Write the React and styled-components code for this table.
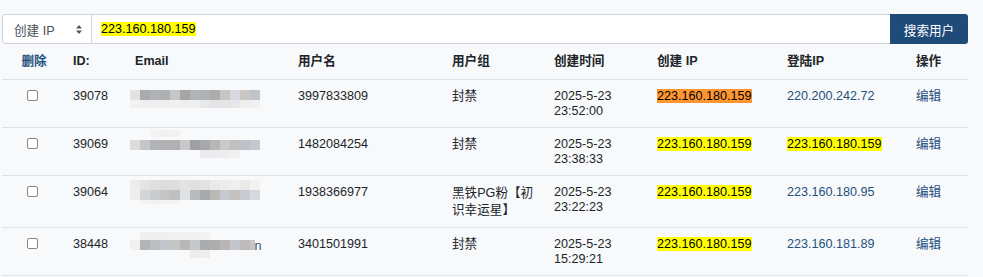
import React from "react";
import styled, { createGlobalStyle } from "styled-components";

const GlobalStyle = createGlobalStyle`
  html, body { margin: 0; padding: 0; background: #f8f9fa; }
  body {
    font-family: "Liberation Sans", Arial, "Noto Sans CJK SC", sans-serif;
    font-size: 12.6px;
    color: #212529;
  }
`;

const LINK = "#23507e";

const Page = styled.div`
  padding: 14px 15px 0 2px;
`;

const SearchBar = styled.div`
  display: flex;
  height: 30px;
`;

const SelectBox = styled.div`
  box-sizing: border-box;
  width: 90px;
  height: 30px;
  display: flex;
  align-items: center;
  justify-content: space-between;
  padding: 0 9px 0 11px;
  background: #fff;
  border: 1px solid #ced4da;
  border-radius: 3px 0 0 3px;
  color: #495057;
`;

const SearchField = styled.div`
  box-sizing: border-box;
  flex: 1;
  height: 30px;
  display: flex;
  align-items: center;
  padding-left: 9px;
  background: #fff;
  border: 1px solid #ced4da;
  border-left: none;
  border-right: none;
`;

const Button = styled.button`
  box-sizing: border-box;
  width: 78px;
  height: 30px;
  border: none;
  border-radius: 0 3px 3px 0;
  background: #1f4b79;
  color: #fff;
  font-family: inherit;
  font-size: 12.6px;
  padding: 0;
`;

const Mark = styled.span`
  background: ${(p) => (p.$active ? "#ff9632" : "#ffff00")};
  color: #000;
`;

const Table = styled.table`
  width: 966px;
  border-collapse: collapse;
  table-layout: fixed;
`;

const Th = styled.th`
  text-align: ${(p) => (p.$center ? "center" : "left")};
  padding: 10px 0 10px ${(p) => (p.$center ? "0" : "7px")};
  line-height: 15px;
  font-weight: bold;
  color: ${(p) => (p.$link ? LINK : "#212529")};
  border-bottom: 1px solid #dee2e6;
  white-space: nowrap;
`;

const Td = styled.td`
  vertical-align: top;
  text-align: ${(p) => (p.$center ? "center" : "left")};
  padding: 9px ${(p) => (p.$center ? "0" : "7px")} 9px
    ${(p) => (p.$center ? "0" : "7px")};
  line-height: ${(p) => (p.$cjk ? "16.5px" : "14.5px")};
  border-bottom: 1px solid #dee2e6;
  color: ${(p) => (p.$link ? LINK : "#212529")};
`;

const Check = styled.input.attrs({ type: "checkbox" })`
  appearance: none;
  box-sizing: border-box;
  display: inline-block;
  width: 11px;
  height: 11px;
  margin: 1px 3px 0 0;
  vertical-align: top;
  background: #fff;
  border: 1px solid #858585;
  border-radius: 2px;
`;

const MosaicSvg = styled.svg`
  display: block;
  overflow: visible;
  margin-left: -5px;
`;

const SelectArrows = () => (
  <svg width="6" height="9" viewBox="0 0 6 9">
    <polygon points="3,0 6,3.5 0,3.5" fill="#555" />
    <polygon points="0,5.5 6,5.5 3,9" fill="#555" />
  </svg>
);

const Mosaic = ({ layers, tail }) => (
  <MosaicSvg width="130" height="29">
    {layers.map((l, li) =>
      l.cells.map((c, i) =>
        c ? (
          <rect
            key={li + "-" + i}
            x={(l.start || 0) * 10 + i * 10}
            y={l.y}
            width={l.w || 10}
            height={l.h}
            fill={c}
          />
        ) : null
      )
    )}
    {tail && (
      <text
        x="124.5"
        y="13"
        fontSize="12.6"
        fontFamily="Liberation Sans, Arial, sans-serif"
        fill="#3f5068"
      >
        n
      </text>
    )}
  </MosaicSvg>
);

const rows = [
  {
    id: "39078",
    user: "3997833809",
    group: "封禁",
    time: "2025-5-23 23:52:00",
    cip: "223.160.180.159",
    active: true,
    lip: "220.200.242.72",
    lipHit: false,
    mosaic: [
      {
        y: 1,
        h: 10,
        cells: ["#e5e2dd", "#a9abaf", "#b0b2b5", "#adb1b4", "#c6c6c6", "#a5a5a6", "#b1b4b6", "#aeb2b5", "#aaacae", "#c8c6c3", "#d6d9de", "#c9c6c4", "#c0c4ca"],
      },
      {
        y: 11,
        h: 8,
        cells: ["#f2f2f2", "#efeff0", "#eeeef0", "#eeeff0", "#f1f1f1", "#efeff0", "#f0f0f0", "#e8e8ea", "#e3e4e7", "#e6e5e3", "#e5e7eb", "#eeeeef", "#f0f0f1"],
      },
    ],
  },
  {
    id: "39069",
    user: "1482084254",
    group: "封禁",
    time: "2025-5-23 23:38:33",
    cip: "223.160.180.159",
    lip: "223.160.180.159",
    lipHit: true,
    mosaic: [
      { y: -7, h: 7, start: 2, cells: ["#f3f3f3", "#f1f1f1", "#f2f2f2"] },
      {
        y: 3,
        h: 10,
        cells: ["#dcdcdd", "#c5c6c6", "#b2b3b6", "#b1b2b4", "#b0b0b2", "#c7c8ca", "#a0a1a3", "#a7a8aa", "#b8b7b5", "#c7cbce", "#c1bfbf", "#bdc2c9", "#c4c8ce"],
      },
      { y: 13, h: 8, start: 7, cells: ["#ebebed", "#ececee", "#eeeef0", "#f1f1f2"] },
    ],
  },
  {
    id: "39064",
    user: "1938366977",
    group: "黑铁PG粉【初识幸运星】",
    cjk: true,
    time: "2025-5-23 23:22:23",
    cip: "223.160.180.159",
    lip: "223.160.180.95",
    lipHit: false,
    mosaic: [
      {
        y: -5,
        h: 10,
        cells: ["#ececec", "#e4e4e4", "#dfdfdf", "#dddddd", "#dedede", "#e3e3e3", "#e0e0e0", "#e3e3e3", "#e9e9e9", "#ececec", "#efefef", "#eaeaea", "#f1f1f1"],
      },
      {
        y: 5,
        h: 10,
        cells: ["#eeeeee", "#d3d5d7", "#c9cbcd", "#c5c5c5", "#bfbfbf", "#dfe2e5", "#b9babc", "#a8a9ab", "#bbb9b6", "#c6cace", "#c4c2c1", "#c8ccd2", "#d6d9dd"],
      },
      { y: 15, h: 4, start: 1, cells: ["#f2f2f3", "#f1f1f2", "#f2f2f2", "#f3f3f3"] },
    ],
  },
  {
    id: "38448",
    user: "3401501991",
    group: "封禁",
    time: "2025-5-23 15:29:21",
    cip: "223.160.180.159",
    lip: "223.160.181.89",
    lipHit: false,
    tail: true,
    mosaic: [
      { y: -5, h: 8, start: 1, cells: ["#efefef", "#eeeeee", "#efefef", "#f0f0f0", "#f0f0f0", "#f1f1f1", "#f2f2f2"] },
      {
        y: 3,
        h: 10,
        cells: ["#f0f0f0", "#b3b4b6", "#bcbdbf", "#c3c7cc", "#c6c6c6", "#b8b6b6", "#c5c8cc", "#acacae", "#aeaeaf", "#b9b7b4", "#c3c7cc", "#bdbbbb"],
      },
      { y: 3, h: 10, w: 5, start: 12, cells: ["#c4c5c8"] },
      { y: 13, h: 8, start: 6, cells: ["#ececed", "#eeeeee"] },
    ],
  },
];

const widths = [64, 62, 163, 154, 102, 103, 130, 129, 59];

export default function App() {
  return (
    <Page>
      <GlobalStyle />
      <SearchBar>
        <SelectBox>
          <span>创建 IP</span>
          <SelectArrows />
        </SelectBox>
        <SearchField>
          <Mark>223.160.180.159</Mark>
        </SearchField>
        <Button>搜索用户</Button>
      </SearchBar>
      <Table>
        <colgroup>
          {widths.map((w, i) => (
            <col key={i} width={w} />
          ))}
        </colgroup>
        <thead>
          <tr>
            <Th $center $link>删除</Th>
            <Th>ID:</Th>
            <Th>Email</Th>
            <Th>用户名</Th>
            <Th>用户组</Th>
            <Th>创建时间</Th>
            <Th>创建 IP</Th>
            <Th>登陆IP</Th>
            <Th>操作</Th>
          </tr>
        </thead>
        <tbody>
          {rows.map((r) => (
            <tr key={r.id}>
              <Td $center>
                <Check />
              </Td>
              <Td>{r.id}</Td>
              <Td>
                <Mosaic layers={r.mosaic} tail={r.tail} />
              </Td>
              <Td>{r.user}</Td>
              <Td $cjk={r.cjk}>{r.group}</Td>
              <Td>{r.time}</Td>
              <Td>
                <Mark $active={r.active}>{r.cip}</Mark>
              </Td>
              <Td $link>{r.lipHit ? <Mark>{r.lip}</Mark> : r.lip}</Td>
              <Td $link>编辑</Td>
            </tr>
          ))}
        </tbody>
      </Table>
    </Page>
  );
}
